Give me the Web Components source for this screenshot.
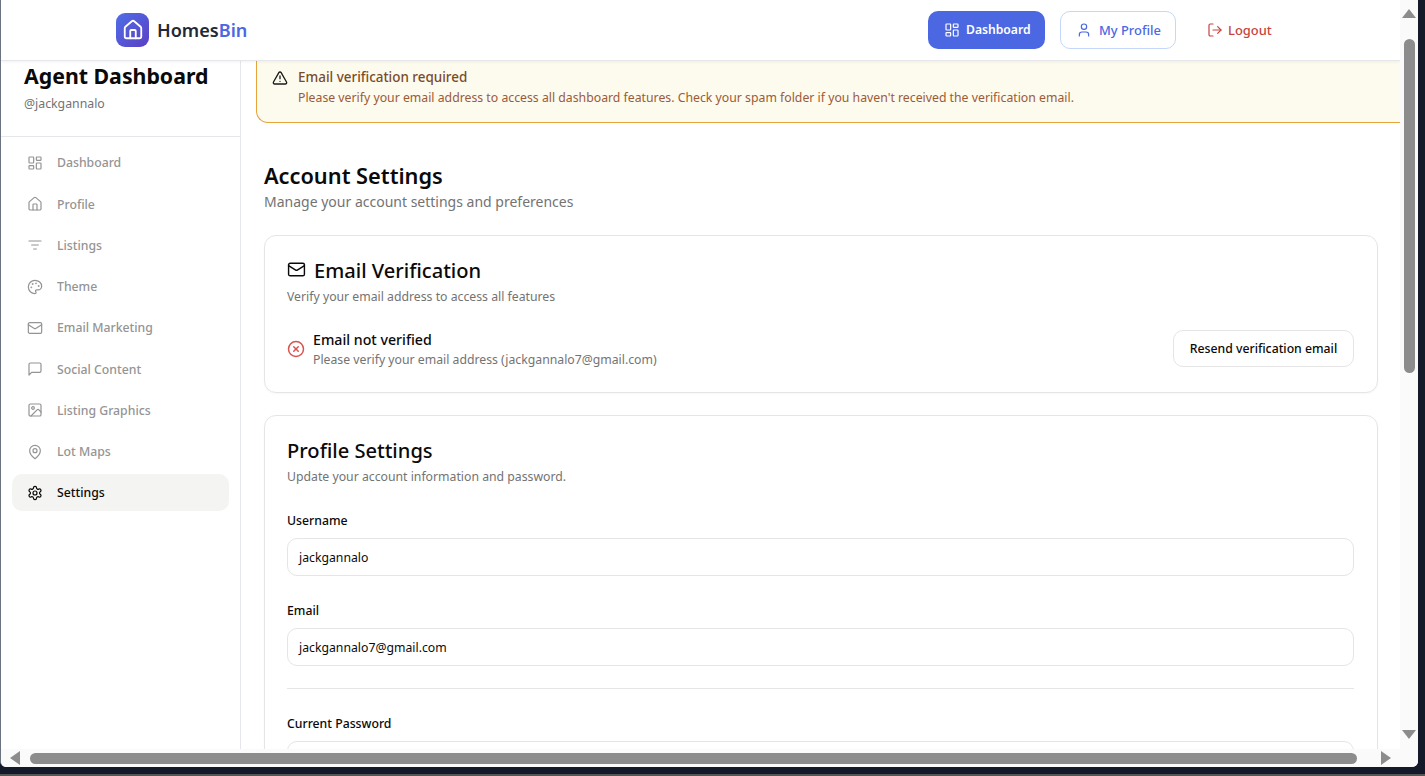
<!DOCTYPE html>
<html lang="en"><head><meta charset="utf-8"><title>HomesBin</title>
<style>
html,body{margin:0;height:100%;overflow:hidden;background:linear-gradient(#141a2a 774px,#555 774px);font-family:"Noto Sans","Open Sans",sans-serif}
</style></head><body>
<app-window>
  <top-bar slot="top"></top-bar>
  <side-nav slot="side"></side-nav>
  <main-pane slot="main">
    <alert-banner></alert-banner>
    <page-body>
      <page-heading></page-heading>
      <verify-card></verify-card>
      <profile-card></profile-card>
    </page-body>
  </main-pane>
</app-window>
<script>
const ICONS={
dashboard:'<rect width="7" height="9" x="3" y="3" rx="1"/><rect width="7" height="5" x="14" y="3" rx="1"/><rect width="7" height="9" x="14" y="12" rx="1"/><rect width="7" height="5" x="3" y="16" rx="1"/>',
home:'<path d="M15 21v-8a1 1 0 0 0-1-1h-4a1 1 0 0 0-1 1v8"/><path d="M3 10a2 2 0 0 1 .709-1.528l7-5.999a2 2 0 0 1 2.582 0l7 5.999A2 2 0 0 1 21 10v9a2 2 0 0 1-2 2H5a2 2 0 0 1-2-2z"/>',
filter:'<path d="M3 6h18"/><path d="M7 12h10"/><path d="M10 18h4"/>',
palette:'<circle cx="13.5" cy="6.5" r=".5" fill="currentColor"/><circle cx="17.5" cy="10.5" r=".5" fill="currentColor"/><circle cx="8.5" cy="7.5" r=".5" fill="currentColor"/><circle cx="6.5" cy="12.5" r=".5" fill="currentColor"/><path d="M12 2C6.5 2 2 6.5 2 12s4.5 10 10 10c.926 0 1.648-.746 1.648-1.688 0-.437-.18-.835-.437-1.125-.29-.289-.438-.652-.438-1.125a1.64 1.64 0 0 1 1.668-1.668h1.996c3.051 0 5.555-2.503 5.555-5.554C21.965 6.012 17.461 2 12 2z"/>',
mail:'<rect width="20" height="16" x="2" y="4" rx="2"/><path d="m22 7-8.97 5.7a1.94 1.94 0 0 1-2.06 0L2 7"/>',
message:'<path d="M21 15a2 2 0 0 1-2 2H7l-4 4V5a2 2 0 0 1 2-2h14a2 2 0 0 1 2 2z"/>',
image:'<rect width="18" height="18" x="3" y="3" rx="2"/><circle cx="9" cy="9" r="2"/><path d="m21 15-3.086-3.086a2 2 0 0 0-2.828 0L6 21"/>',
pin:'<path d="M20 10c0 6-8 12-8 12s-8-6-8-12a8 8 0 0 1 16 0Z"/><circle cx="12" cy="10" r="3"/>',
settings:'<path d="M12.22 2h-.44a2 2 0 0 0-2 2v.18a2 2 0 0 1-1 1.73l-.43.25a2 2 0 0 1-2 0l-.15-.08a2 2 0 0 0-2.73.73l-.22.38a2 2 0 0 0 .73 2.73l.15.1a2 2 0 0 1 1 1.72v.51a2 2 0 0 1-1 1.74l-.15.09a2 2 0 0 0-.73 2.73l.22.38a2 2 0 0 0 2.73.73l.15-.08a2 2 0 0 1 2 0l.43.25a2 2 0 0 1 1 1.73V20a2 2 0 0 0 2 2h.44a2 2 0 0 0 2-2v-.18a2 2 0 0 1 1-1.73l.43-.25a2 2 0 0 1 2 0l.15.08a2 2 0 0 0 2.73-.73l.22-.39a2 2 0 0 0-.73-2.73l-.15-.08a2 2 0 0 1-1-1.74v-.5a2 2 0 0 1 1-1.74l.15-.09a2 2 0 0 0 .73-2.73l-.22-.38a2 2 0 0 0-2.73-.73l-.15.08a2 2 0 0 1-2 0l-.43-.25a2 2 0 0 1-1-1.73V4a2 2 0 0 0-2-2z"/><circle cx="12" cy="12" r="3"/>',
alert:'<path d="m21.73 18-8-14a2 2 0 0 0-3.48 0l-8 14A2 2 0 0 0 4 21h16a2 2 0 0 0 1.73-3"/><path d="M12 9v4"/><path d="M12 17h.01"/>',
xcircle:'<circle cx="12" cy="12" r="10"/><path d="m15 9-6 6"/><path d="m9 9 6 6"/>',
user:'<path d="M19 21v-2a4 4 0 0 0-4-4H9a4 4 0 0 0-4 4v2"/><circle cx="12" cy="7" r="4"/>',
logout:'<path d="M9 21H5a2 2 0 0 1-2-2V5a2 2 0 0 1 2-2h4"/><polyline points="16 17 21 12 16 7"/><line x1="21" x2="9" y1="12" y2="12"/>'
};
function el(name,css,html,init){
  customElements.define(name,class extends HTMLElement{
    constructor(){super();this.attachShadow({mode:'open'}).innerHTML='<style>'+css+'</style>'+html;}
    connectedCallback(){if(init)init(this);}
  });
}
el('ui-icon',':host{display:inline-flex;flex:none;width:var(--s,16px);height:var(--s,16px)}svg{width:100%;height:100%;display:block}','',h=>{
  if(h.shadowRoot.querySelector('svg'))return;
  const sw=h.getAttribute('sw')||2;
  h.shadowRoot.innerHTML+='<svg viewBox="0 0 24 24" fill="none" stroke="currentColor" stroke-width="'+sw+'" stroke-linecap="round" stroke-linejoin="round">'+ICONS[h.getAttribute('name')]+'</svg>';
});
el('app-window',`:host{display:grid;box-sizing:border-box;width:1418px;height:767px;background:#fff;border-left:1px solid #6b7280;border-radius:0 0 6px 6px;overflow:hidden;grid-template-columns:1fr 18px;grid-template-rows:1fr 18px}
.view{display:grid;grid-template-columns:240px 1fr;grid-template-rows:61px 1fr;min-width:0;min-height:0;overflow:hidden}
.top{grid-column:1/3}
.side{display:flex;min-height:0}.main{display:flex;min-width:0;min-height:0;overflow:hidden}
::slotted(*){flex:1}
.vbar,.hbar{background:#fafafa;display:flex}
.vbar{flex-direction:column;align-items:center;padding-top:9px;padding-bottom:9px;justify-content:space-between}
.hbar{align-items:center;padding:0 9px}
.vthumb{width:11px;height:334px;border-radius:6px;background:#8c8c8c;margin-top:20px;margin-bottom:auto}
.hthumb{height:11px;width:1327px;border-radius:6px;background:#8c8c8c;margin-left:10px}
.corner{background:#fafafa}
svg{display:block;fill:#8c8c8c;flex:none}`,
`<div class="view"><div class="top"><slot name="top"></slot></div><div class="side"><slot name="side"></slot></div><div class="main"><slot name="main"></slot></div></div>
<div class="vbar"><svg width="14" height="10" viewBox="0 0 14 10"><path d="M7 0 14 9H0Z"/></svg><div class="vthumb"></div><svg width="14" height="10" viewBox="0 0 14 10"><path d="M0 0H14L7 9Z"/></svg></div>
<div class="hbar"><svg width="10" height="14" viewBox="0 0 10 14"><path d="M10 0V14L0 7Z"/></svg><div class="hthumb"></div><svg width="10" height="14" viewBox="0 0 10 14" style="margin-left:auto"><path d="M0 0V14L10 7Z"/></svg></div>
<div class="corner"></div>`);
el('top-bar',`:host{display:flex;box-sizing:border-box;height:61px;align-items:center;background:#fff;border-bottom:1px solid #e5e7eb;box-shadow:0 1px 3px rgba(0,0,0,.06);padding:0 114px 1px 115px;position:relative;z-index:2}
.logo{width:33px;height:34px;border-radius:9px;background:linear-gradient(135deg,#4f6ee8,#5b3fc4);color:#fff;display:flex;align-items:center;justify-content:center;--s:22px}
.name{font-size:18.1px;font-weight:600;color:#1f2937;margin-left:8px}
.name b{color:#4c67e2;font-weight:600}
nav{margin-left:auto;display:flex;gap:15px;align-items:center}
.b{display:flex;align-items:center;gap:7px;height:38px;box-sizing:border-box;padding:0 15px;border-radius:10px;border:1px solid transparent;white-space:nowrap;font-size:12.9px;font-weight:500;line-height:20px}
.dash{background:#4c67e2;color:#fff;width:117px;font-weight:600;font-size:12.15px;gap:6px}
.prof{border-color:#c5d7fb;color:#4c67e2;width:116px}
.out{color:#c8423f;width:95px;gap:5px}
`,`<div class="logo"><ui-icon name="home" sw="2"></ui-icon></div><div class="name">Homes<b>Bin</b></div>
<nav><div class="b dash"><ui-icon name="dashboard" sw="1.8"></ui-icon>Dashboard</div><div class="b prof"><ui-icon name="user" sw="1.8"></ui-icon>My Profile</div><div class="b out"><ui-icon name="logout" sw="1.8"></ui-icon>Logout</div></nav>`);
el('nav-item',`:host{display:flex;align-items:center;gap:14px;height:37.25px;padding:0 15px;border-radius:10px;font-size:12.25px;font-weight:500;color:#949494;--s:16px}
:host([active]){background:#f4f4f3;color:#0a0a0a;height:37px}`,`<slot name="icon"></slot><slot></slot>`);
el('side-nav',`:host{display:flex;flex-direction:column;box-sizing:border-box;width:240px;border-right:1px solid #e5e7eb;background:#fff;overflow:hidden}
.head{height:76px;box-sizing:border-box;border-bottom:1px solid #e5e7eb;padding:0 23px;flex:none}
h2{margin:0;font-size:21.3px;line-height:30px;font-weight:700;color:#0a0a0a}
p{margin:4px 0 0;font-size:12.3px;line-height:18px;color:#737373}
.list{display:flex;flex-direction:column;gap:4px;padding:7.25px 11px 0 11px}`,
`<div class="head"><h2>Agent Dashboard</h2><p>@jackgannalo</p></div>
<div class="list"><nav-item><ui-icon slot="icon" name="dashboard" sw="1.8"></ui-icon>Dashboard</nav-item><nav-item><ui-icon slot="icon" name="home" sw="1.8"></ui-icon>Profile</nav-item><nav-item><ui-icon slot="icon" name="filter" sw="1.8"></ui-icon>Listings</nav-item><nav-item><ui-icon slot="icon" name="palette" sw="1.8"></ui-icon>Theme</nav-item><nav-item><ui-icon slot="icon" name="mail" sw="1.8"></ui-icon>Email Marketing</nav-item><nav-item><ui-icon slot="icon" name="message" sw="1.8"></ui-icon>Social Content</nav-item><nav-item><ui-icon slot="icon" name="image" sw="1.8"></ui-icon>Listing Graphics</nav-item><nav-item><ui-icon slot="icon" name="pin" sw="1.8"></ui-icon>Lot Maps</nav-item><nav-item active><ui-icon slot="icon" name="settings" sw="1.8"></ui-icon>Settings</nav-item></div>`);
el('main-pane',`:host{display:block;min-width:0;overflow:hidden;background:#fff}`,`<slot></slot>`);
el('alert-banner',`:host{display:flex;gap:10px;box-sizing:border-box;height:62px;margin-left:15px;padding:5px 16px 0 15px;background:#fdfbee;border:1px solid #e8a33a;border-top:0;border-right:0;border-radius:0 0 0 12px}
ui-icon{color:#1a1a1a;--s:16px;margin-top:4px}
h4{margin:0;font-size:13.45px;line-height:22px;font-weight:500;color:#7a4b2c}
p{margin:0;font-size:12.28px;line-height:20px;color:#9c5a36}`,
`<ui-icon name="alert"></ui-icon><div><h4>Email verification required</h4><p>Please verify your email address to access all dashboard features. Check your spam folder if you haven't received the verification email.</p></div>`);
el('page-body',`:host{display:flex;flex-direction:column;gap:22px;padding:38px 22px 0 23px}`,`<slot></slot>`);
el('page-heading',`:host{display:block}
h1{margin:0;font-size:21.75px;line-height:30px;font-weight:600;color:#0a0a0a}
p{margin:0;font-size:14px;line-height:22px;color:#737373}`,`<h1>Account Settings</h1><p>Manage your account settings and preferences</p>`);
const cardCss=`:host{display:block;box-sizing:border-box;border:1px solid #e5e5e5;border-radius:12px;background:#fff;padding:20px 23px 20px 22px;box-shadow:0 1px 2px rgba(0,0,0,.03)}
h3{margin:1px 0 0;font-size:20.1px;line-height:28px;font-weight:500;color:#0a0a0a;display:flex;align-items:center;gap:8px}
.d{margin:3px 0 0;font-size:12.25px;line-height:18px;color:#737373}`;
el('verify-card',cardCss+`:host{height:158px}
h3 ui-icon{--s:19px;margin-top:-4px}
.row{display:flex;align-items:center;margin-top:24px;height:37px}
.x{color:#d9534f;--s:18px;margin:0 8px 0 0}
.txt{margin-top:2px}
.t{font-size:14.2px;line-height:20px;font-weight:500;color:#0a0a0a}
.s{font-size:12.25px;line-height:18px;color:#737373;margin-top:1px}
.btn{margin-left:auto;height:37px;box-sizing:border-box;display:flex;align-items:center;padding:0 15px;border:1px solid #e5e5e5;border-radius:10px;font-size:12.25px;font-weight:500;color:#0a0a0a;width:181px;justify-content:center;white-space:nowrap}`,
`<h3><ui-icon name="mail" sw="1.8"></ui-icon>Email Verification</h3><p class="d">Verify your email address to access all features</p>
<div class="row"><ui-icon class="x" name="xcircle"></ui-icon><div class="txt"><div class="t">Email not verified</div><div class="s">Please verify your email address (jackgannalo7@gmail.com)</div></div><div class="btn">Resend verification email</div></div>`);
el('form-field',`:host{display:block}
label{display:block;font-size:12.25px;line-height:18px;font-weight:500;color:#0a0a0a;margin:1px 0 8px}
.i{height:38px;box-sizing:border-box;border:1px solid #e5e5e5;border-radius:10px;padding:0 11px;display:flex;align-items:center;font-size:12.25px;color:#0a0a0a}`,
`<label></label><div class="i"></div>`,h=>{h.shadowRoot.querySelector('label').textContent=h.getAttribute('label');h.shadowRoot.querySelector('.i').textContent=h.getAttribute('value')||'';});
el('profile-card',cardCss+`:host{flex:none}
.f{margin-top:25px;display:flex;flex-direction:column;gap:25px}
hr{border:0;border-top:1px solid #e5e5e5;margin:-3px 0 0}`,
`<h3>Profile Settings</h3><p class="d">Update your account information and password.</p>
<div class="f"><form-field label="Username" value="jackgannalo"></form-field><form-field label="Email" value="jackgannalo7@gmail.com"></form-field><hr><form-field label="Current Password"></form-field></div>`);
</script>
</body></html>
